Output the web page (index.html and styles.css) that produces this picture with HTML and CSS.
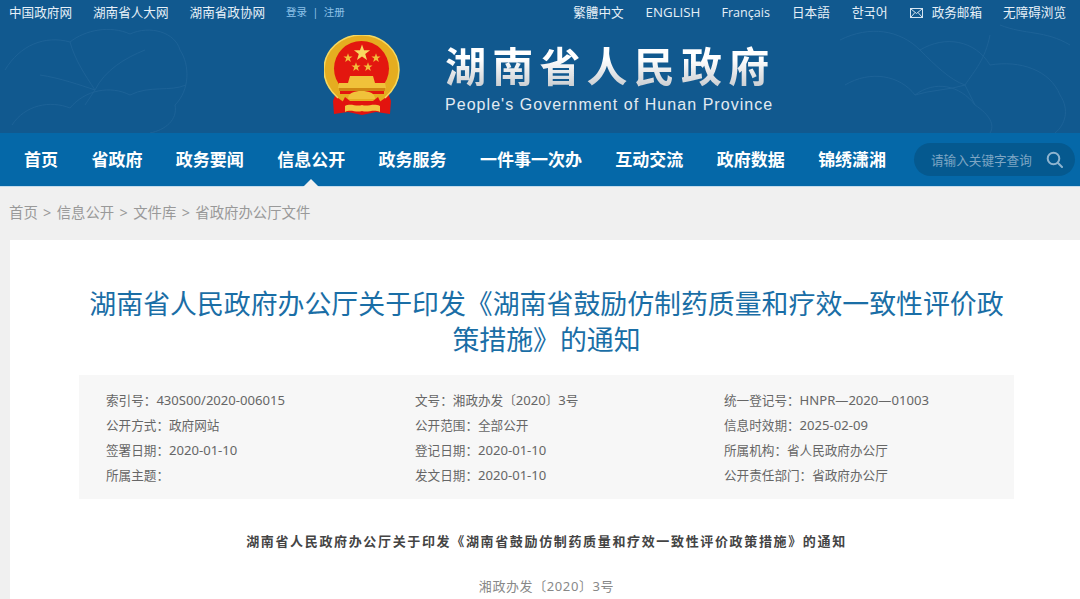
FILE: index.html
```html
<!DOCTYPE html>
<html lang="zh-CN">
<head>
  <meta charset="UTF-8" />
  <title>湖南省人民政府</title>
  <link rel="stylesheet" href="styles.css">
</head>
<body>
  <!-- Header -->
  <header class="header">
    <svg class="flowers" width="1080" height="133" viewBox="0 0 1080 133" fill="none" stroke="#2f70a3" stroke-width="1" opacity="0.4">
      <path d="M5 70C20 45 45 35 70 42C85 30 110 25 130 34C150 25 175 32 180 50C190 65 190 90 175 105C178 120 165 130 150 133"/>
      <path d="M12 125C25 105 50 100 70 108C85 90 110 85 130 95C150 85 170 92 186 85"/>
      <path d="M70 42C75 60 85 75 95 90C105 70 125 58 145 50M95 90C80 85 60 78 40 75M95 90L85 105"/>
      <path d="M840 40C870 25 900 30 920 50C945 35 975 40 990 65C1020 60 1050 70 1060 95C1070 110 1065 125 1055 133"/>
      <path d="M845 85C870 70 900 75 915 95C935 80 960 85 975 105C990 115 995 125 990 133"/>
      <path d="M920 50C935 65 950 80 965 85C975 70 985 60 990 35M965 85C950 90 930 90 915 95M965 85L975 105"/>
      <path d="M1000 25C1025 35 1045 30 1070 45"/>
    </svg>
    <div class="topbar">
      <div class="topbar-left">
        <a>中国政府网</a>
        <a>湖南省人大网</a>
        <a>湖南省政协网</a>
        <span class="login">登录 &nbsp;|&nbsp; 注册</span>
      </div>
      <div class="topbar-right">
        <a>繁體中文</a>
        <a class="latin english">ENGLISH</a>
        <a class="latin">Français</a>
        <a>日本語</a>
        <a class="korean">한국어</a>
        <a class="mail">
          <svg width="13" height="10" viewBox="0 0 13 10" fill="none" stroke="#d5e4f0" stroke-width="1"><rect x="0.5" y="0.5" width="12" height="9"/><path d="M1 1l5.500 4.500L12 1M1 9l4-4.500M12 9L8 4.500"/></svg>
          政务邮箱
        </a>
        <a class="access">无障碍浏览</a>
      </div>
    </div>
    <div class="brand">
      <svg class="emblem" width="76" height="82" viewBox="0 0 76 82">
        <defs>
          <polygon id="star" points="0,-10 2.400,-3.200 9.500,-3.100 3.800,1.200 5.900,8.100 0,4 -5.900,8.100 -3.800,1.200 -9.500,-3.100 -2.400,-3.200"/>
        </defs>
        <path d="M12 58L9 66L10 79L24 77L38 80L52 77L66 79L67 66L64 58Z" fill="#e2130f"/>
        <path d="M14 63C4 54 0 45 0 35C0 15 17 0 37.500 0C58 0 75 15 75 35C75 45 71 54 61 63L54 68H21Z" fill="#e5ad20"/>
        <path d="M14 63C4 54 0 45 0 35C0 15 17 0 37.500 0C58 0 75 15 75 35C75 45 71 54 61 63" fill="none" stroke="#f5d860" stroke-width="1.500"/>
        <circle cx="37.500" cy="33.500" r="27.500" fill="#e3170f"/>
        <use href="#star" transform="translate(38 18) scale(.85)" fill="#f8d860"/>
        <use href="#star" transform="translate(24 23) scale(.48)" fill="#f3bd3a"/>
        <use href="#star" transform="translate(52 23) scale(.48)" fill="#f3bd3a"/>
        <use href="#star" transform="translate(32 32) scale(.48)" fill="#f3bd3a"/>
        <use href="#star" transform="translate(44 32) scale(.48)" fill="#f3bd3a"/>
        <path d="M26 41h23l2 7h10l1 5H14l1-5h9z" fill="#f0c23a"/>
        <path d="M15 53h46v3H15z" fill="#cf8712"/>
        <path d="M16 56h44v3H16z" fill="#e3170f"/>
        <path d="M24 64C24 58 30 56 37.500 56C45 56 51 58 51 64Z" fill="#f0c23a"/>
        <path d="M21 62L26 66H49L54 62L57 68L38 70L18 68Z" fill="#e2130f"/>
        <path d="M21 71C27 68 32 72 38 70C44 72 49 68 56 71V77C49 74 44 78 38 76C32 78 27 74 21 77Z" fill="#f2c640"/>
      </svg>
      <div class="brand-text">
        <div class="brand-cn">湖南省人民政府</div>
        <div class="brand-en">People's Government of Hunan Province</div>
      </div>
    </div>
  </header>

  <!-- Main nav -->
  <nav class="nav">
    <div class="nav-links">
      <a>首页</a>
      <a>省政府</a>
      <a>政务要闻</a>
      <a class="active">信息公开</a>
      <a>政务服务</a>
      <a>一件事一次办</a>
      <a>互动交流</a>
      <a>政府数据</a>
      <a>锦绣潇湘</a>
    </div>
    <div class="search">
      <span>请输入关键字查询</span>
      <svg width="17" height="17" viewBox="0 0 17 17" fill="none" stroke="#8fb4cf" stroke-width="2"><circle cx="7.500" cy="7.500" r="5.800"/><path d="M12 12l4 4" stroke-linecap="round"/></svg>
    </div>
  </nav>

  <div class="crumbs">首页 &gt; 信息公开 &gt; 文件库 &gt; 省政府办公厅文件</div>

  <!-- Article -->
  <main class="card">
    <h1 class="title">湖南省人民政府办公厅关于印发《湖南省鼓励仿制药质量和疗效一致性评价政策措施》的通知</h1>
    <div class="meta">
      <div>索引号：<span class="num">430S00/2020-006015</span></div>
      <div>文号：湘政办发〔<span class="num">2020</span>〕<span class="num">3</span>号</div>
      <div>统一登记号：<span class="num">HNPR—2020—01003</span></div>
      <div>公开方式：政府网站</div>
      <div>公开范围：全部公开</div>
      <div>信息时效期：<span class="num">2025-02-09</span></div>
      <div>签署日期：<span class="num">2020-01-10</span></div>
      <div>登记日期：<span class="num">2020-01-10</span></div>
      <div>所属机构：省人民政府办公厅</div>
      <div>所属主题：</div>
      <div>发文日期：<span class="num">2020-01-10</span></div>
      <div>公开责任部门：省政府办公厅</div>
    </div>
    <h2 class="doc-title">湖南省人民政府办公厅关于印发《湖南省鼓励仿制药质量和疗效一致性评价政策措施》的通知</h2>
    <p class="doc-no">湘政办发〔2020〕3号</p>
  </main>
</body>
</html>
```

FILE: styles.css
```css
* { margin: 0; padding: 0; box-sizing: border-box; }
html, body { height: 599px; overflow: hidden; }
body {
  font-family: "Noto Sans", "Noto Sans CJK SC", sans-serif;
  background: #f0f0f0;
  color: #666;
}
.header {
  position: relative;
  height: 133px;
  background: #11598f;
  color: #e6f0f8;
}
.flowers { position: absolute; left: 0; top: 0; }
.topbar {
  position: relative;
  display: flex;
  justify-content: space-between;
  height: 25px;
  padding: 0 14px 0 9px;
  font-size: 12.6px;
  line-height: 25px;
}
.topbar-left, .topbar-right { display: flex; align-items: center; }
.topbar-left { gap: 21px; }
.topbar-right { gap: 22px; }
.login { font-size: 10.5px; color: #8ec2e8; }
.latin { font-family: "Open Sans", sans-serif; }
.english { font-size: 13.3px; margin-right: -1px; }
.korean { font-family: "Noto Sans CJK KR", sans-serif; font-size: 13px; margin-top: -2px; }
.mail { display: flex; align-items: center; gap: 9px; }
.access { margin-left: -1px; }
.brand {
  position: relative;
  display: flex;
  align-items: flex-start;
  gap: 45px;
  padding: 10px 0 0 324px;
}
.brand-text { padding-top: 7px; }
.brand-cn {
  font-size: 41px;
  font-weight: 700;
  line-height: 48px;
  letter-spacing: 6.2px;
  white-space: nowrap;
  background: linear-gradient(#ffffff 35%, #c4c8cc);
  -webkit-background-clip: text;
  background-clip: text;
  color: transparent;
}
.brand-en {
  margin-top: 5px;
  font-family: "Liberation Sans", sans-serif;
  font-size: 16px;
  line-height: 20px;
  letter-spacing: 1.05px;
  color: #e3ebf2;
  white-space: nowrap;
}
.nav {
  position: relative;
  display: flex;
  align-items: center;
  justify-content: space-between;
  height: 53px;
  padding: 0 5px 0 24px;
  background: #0568a8;
  box-shadow: 0 1px 0 #c5dcec;
}
.nav-links { display: flex; gap: 33.4px; }
.nav-links a {
  position: relative;
  font-size: 17px;
  font-weight: 700;
  line-height: 53px;
  color: #fff;
}
.nav-links .active::after {
  content: "";
  position: absolute;
  left: 50%;
  bottom: -1px;
  margin-left: -8px;
  border: 8px solid transparent;
  border-top: 0;
  border-bottom-color: #f0f0f0;
}
.search {
  display: flex;
  align-items: center;
  justify-content: space-between;
  width: 161px;
  height: 33px;
  padding: 0 12px 0 17px;
  border-radius: 17px;
  background: #05598f;
  font-size: 12.6px;
  color: #7ea6c4;
  white-space: nowrap;
}
.crumbs {
  height: 54px;
  padding-left: 9px;
  font-size: 14.4px;
  line-height: 54px;
  word-spacing: 1.6px;
  color: #999;
}
.card {
  margin-left: 10px;
  height: 359px;
  padding: 46px 66px 0 69px;
  background: #fff;
}
.title {
  padding: 0 8px;
  font-size: 26.9px;
  font-weight: 400;
  line-height: 36px;
  text-align: center;
  color: #1a6ea6;
}
.meta {
  display: grid;
  grid-template-columns: 309px 309px 1fr;
  margin-top: 17px;
  padding: 13px 0 11px 27px;
  background: #f7f7f7;
  font-size: 12.6px;
  line-height: 25px;
  color: #666;
}
.num { font-size: 13.1px; }
.doc-title {
  margin-top: 32px;
  font-size: 13px;
  font-weight: 700;
  line-height: 20px;
  letter-spacing: 1.65px;
  text-align: center;
  color: #444;
}
.doc-no {
  margin-top: 25px;
  font-size: 13px;
  line-height: 20px;
  letter-spacing: 0.6px;
  text-align: center;
  color: #888;
}
```
